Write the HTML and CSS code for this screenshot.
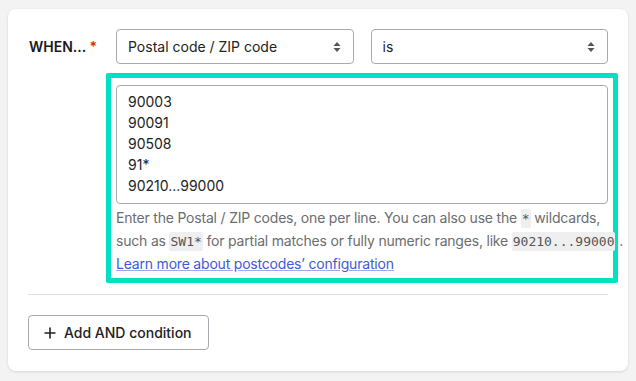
FILE: index.html
```html
<!DOCTYPE html>
<html lang="en">
  <head>
    <meta charset="UTF-8" />
    <meta name="viewport" content="width=device-width, initial-scale=1.0" />
    <title>Shipping rule condition</title>
    <link rel="stylesheet" href="styles.css">
  </head>
  <body>
    <div class="card">
      <div class="condition">
        <label class="label">WHEN... <span class="required">*</span></label>
        <div class="fields">
          <div class="selects">
            <div class="select">
              <span>Postal code / ZIP code</span>
              <svg width="8" height="12" viewBox="0 0 8 12"><path d="M4 1 L7.5 5 H0.5 Z M4 11 L7.5 7 H0.5 Z" fill="#555"/></svg>
            </div>
            <div class="select">
              <span>is</span>
              <svg width="8" height="12" viewBox="0 0 8 12"><path d="M4 1 L7.5 5 H0.5 Z M4 11 L7.5 7 H0.5 Z" fill="#555"/></svg>
            </div>
          </div>
          <div class="highlight">
            <textarea class="codes" rows="5">90003
90091
90508
91*
90210...99000</textarea>
            <p class="help">
              Enter the Postal / ZIP codes, one per line. You can also use the <code>*</code> wildcards,<br>
              such as <code>SW1*</code> for partial matches or fully numeric ranges, like <code>90210...99000</code> .<br>
              <a href="#">Learn more about postcodes’ configuration</a>
            </p>
          </div>
        </div>
      </div>
      <hr class="divider" />
      <button class="btn">
        <svg width="12" height="12" viewBox="0 0 12 12"><path d="M6 0.5 V11.5 M0.5 6 H11.5" stroke="#222" stroke-width="1.6"/></svg>
        Add AND condition
      </button>
    </div>
  </body>
</html>
```

FILE: styles.css
```css
body {
  font-family: Inter, "Noto Sans", sans-serif;
  font-size: 14px;
  color: #222;
  margin: 0;
  padding: 9px 8px;
  background-color: #f3f3f3;
}
.card {
  width: 580px;
  background-color: white;
  padding: 20px 20px 21px;
  border-radius: 8px;
  box-shadow: 0 1px 3px rgba(0, 0, 0, 0.12);
}
.condition {
  display: flex;
}
.label {
  width: 88px;
  flex-shrink: 0;
  font-weight: 600;
  color: #1a1a1a;
  line-height: 35px;
  padding-left: 1px;
  box-sizing: border-box;
}
.required {
  color: #d82c0d;
}
.fields {
  flex: 1;
  min-width: 0;
}
.selects {
  display: flex;
  gap: 17px;
}
.select {
  flex: 1;
  height: 35px;
  box-sizing: border-box;
  border: 1px solid #a7abaf;
  border-radius: 4px;
  padding: 0 12px 0 11px;
  display: flex;
  align-items: center;
  justify-content: space-between;
  color: #222;
}
.highlight {
  margin: 9px -10px 0;
  border: 5px solid #00e0c2;
  border-radius: 2px;
  padding: 7px 5px 3px;
}
.codes {
  display: block;
  width: 100%;
  box-sizing: border-box;
  height: 119px;
  border: 1px solid #a7abaf;
  border-radius: 4px;
  padding: 5px 11px;
  font-family: inherit;
  font-size: 14px;
  line-height: 21px;
  color: #222;
  resize: none;
}
.help {
  margin: 3px 0 0;
  color: #6b6d70;
  line-height: 22px;
  white-space: nowrap;
  letter-spacing: -0.2px;
}
.help code {
  font-family: "DejaVu Sans Mono", monospace;
  font-size: 13px;
  letter-spacing: 0;
  background-color: #efefef;
  padding: 2px 1px;
  border-radius: 2px;
  color: #555;
}
.help a {
  color: #3b5bdb;
  text-decoration: underline;
  text-decoration-color: #9aabea;
}
.divider {
  border: none;
  border-top: 1px solid #e1e1e1;
  margin: 11px 0 20px;
}
.btn {
  display: inline-flex;
  align-items: center;
  gap: 8px;
  height: 35px;
  padding: 0 16px 0 15px;
  background-color: white;
  border: 1px solid #a7abaf;
  border-radius: 4px;
  font-family: inherit;
  font-size: 14px;
  font-weight: 500;
  color: #222;
}
```
